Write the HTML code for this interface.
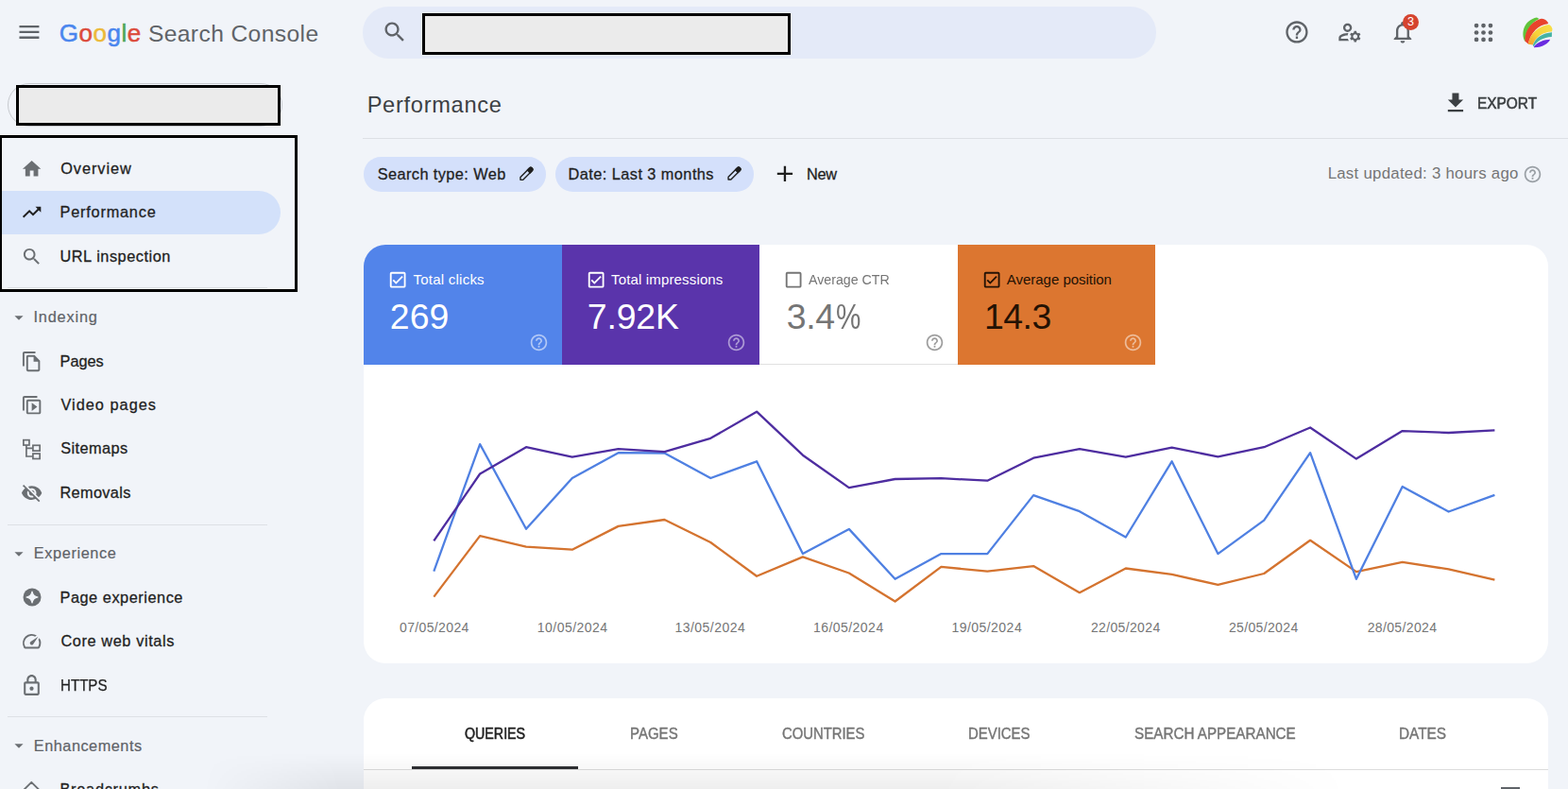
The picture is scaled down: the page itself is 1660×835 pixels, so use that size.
<!DOCTYPE html>
<html lang="en">
<head>
<meta charset="utf-8">
<title>Performance</title>
<style>
*{box-sizing:border-box;margin:0;padding:0}
html,body{width:1660px;height:835px;overflow:hidden;background:#f1f4f9}
body{position:relative;font-family:"Liberation Sans",Arial,sans-serif;color:#202124}
.a{position:absolute}
.t{position:absolute;white-space:nowrap}
svg{position:absolute;display:block;overflow:visible}
.hr{position:absolute;height:1px;background:#dde0e5}
</style>
</head>
<body>
<div id="hdr">
<svg style="left:17.25px;top:20.40px;fill:#5f6368" width="27.90" height="27.90" viewBox="0 0 24 24"><path d="M3 18h18v-2H3v2zm0-5h18v-2H3v2zm0-7v2h18V6H3z"/></svg>
<div class="t" id="logo" style="left:62.70px;top:18.20px;line-height:34px;height:34px;font-size:26px;letter-spacing:0.520px;-webkit-text-stroke:.5px"><span style="color:#4a86ee">G</span><span style="color:#dc4b3c">o</span><span style="color:#ecb93a">o</span><span style="color:#4a86ee">g</span><span style="color:#4ea65a">l</span><span style="color:#dc4b3c">e</span></div>
<div class="t" id="sc" style="left:156.90px;top:19.98px;line-height:32px;height:32px;font-size:24.6px;letter-spacing:0.400px;color:#5f6368;">Search Console</div>
<div class="a" id="sbar" style="left:384.2px;top:7.2px;width:840px;height:54.5px;border-radius:27.25px;background:#e4eaf8"></div>
<svg style="left:403.65px;top:20.25px;fill:#5f6368" width="27.90" height="27.90" viewBox="0 0 24 24"><path d="M15.5 14h-.79l-.28-.27C15.410 12.590 16 11.110 16 9.500 16 5.910 13.090 3 9.500 3S3 5.910 3 9.500 5.910 16 9.500 16c1.610 0 3.090-.59 4.230-1.570l.27.28v.79l5 4.990L20.490 19l-4.990-5zm-6 0C7.010 14 5 11.990 5 9.500S7.010 5 9.500 5 14 7.010 14 9.500 11.990 14 9.500 14z"/></svg>
<div class="a" id="red1" style="left:447px;top:14px;width:390.4px;height:44px;border:3px solid #000;background:#ebebeb"></div>
<svg style="left:1358.65px;top:20.35px;fill:#5f6368" width="27.90" height="27.90" viewBox="0 0 24 24"><path d="M11 18h2v-2h-2v2zm1-16C6.480 2 2 6.480 2 12s4.480 10 10 10 10-4.480 10-10S17.520 2 12 2zm0 18c-4.410 0-8-3.590-8-8s3.590-8 8-8 8 3.590 8 8-3.590 8-8 8zm0-14c-2.210 0-4 1.790-4 4h2c0-1.100.9-2 2-2s2 .9 2 2c0 2-3 1.750-3 5h2c0-2.250 3-2.500 3-5 0-2.210-1.790-4-4-4z"/></svg>
<svg style="left:1414.56px;top:20.17px;fill:#5f6368" width="27.90" height="27.90" viewBox="0 0 24 24"><path d="M4 18v-.65c0-.34.16-.66.41-.81C6.100 15.530 8.030 15 10 15c.03 0 .05 0 .08.010.1-.7.3-1.370.59-1.980-.22-.02-.44-.03-.67-.03-2.420 0-4.680.67-6.610 1.820-.88.52-1.390 1.500-1.390 2.530V20h9.260c-.42-.6-.75-1.280-.97-2H4zM10 12c2.210 0 4-1.790 4-4s-1.790-4-4-4-4 1.790-4 4 1.790 4 4 4zm0-6c1.100 0 2 .9 2 2s-.9 2-2 2-2-.9-2-2 .9-2 2-2zM20.750 16c0-.22-.03-.42-.06-.63l1.140-1.010-1-1.730-1.450.49c-.32-.27-.68-.48-1.080-.63L18 11h-2l-.3 1.490c-.4.15-.76.36-1.080.63l-1.450-.49-1 1.730 1.140 1.010c-.03.21-.06.41-.06.63s.03.42.06.63l-1.140 1.010 1 1.730 1.450-.49c.32.27.68.48 1.080.63L16 21h2l.3-1.490c.4-.15.76-.36 1.080-.63l1.450.49 1-1.730-1.140-1.010c.03-.21.06-.41.06-.63zM17 18c-1.100 0-2-.9-2-2s.9-2 2-2 2 .9 2 2-.9 2-2 2z"/></svg>
<svg style="left:1470.60px;top:20.36px;fill:#5f6368" width="27.90" height="27.90" viewBox="0 0 24 24"><path d="M12 22c1.100 0 2-.9 2-2h-4c0 1.100.9 2 2 2zm6-6v-5c0-3.070-1.630-5.640-4.500-6.320V4c0-.83-.67-1.500-1.500-1.500s-1.500.67-1.500 1.500v.68C7.640 5.360 6 7.920 6 11v5l-2 2v1h16v-1l-2-2zm-2 1H8v-6c0-2.480 1.510-4.500 4-4.500s4 2.020 4 4.500v6z"/></svg>
<div class="a" id="badge" style="left:1484.8px;top:14.6px;width:17.3px;height:17.3px;border-radius:50%;background:#d5442f"></div>
<div class="t" style="left:1484.8px;top:14.6px;width:17.3px;height:17.3px;line-height:17.3px;text-align:center;font-size:12.5px;color:#fff">3</div>
<svg style="left:0;top:0;fill:#5f6368" width="1660" height="70" viewBox="0 0 1660 70"><circle cx="1563.05" cy="27.05" r="2.35"/><circle cx="1563.05" cy="34.50" r="2.35"/><circle cx="1563.05" cy="41.95" r="2.35"/><circle cx="1570.50" cy="27.05" r="2.35"/><circle cx="1570.50" cy="34.50" r="2.35"/><circle cx="1570.50" cy="41.95" r="2.35"/><circle cx="1577.95" cy="27.05" r="2.35"/><circle cx="1577.95" cy="34.50" r="2.35"/><circle cx="1577.95" cy="41.95" r="2.35"/></svg>
<svg id="avatar" style="left:1610.5px;top:18.2px" width="33" height="33" viewBox="0 0 33 33"><defs><linearGradient id="avy" x1="0" y1="1" x2="1" y2="0"><stop offset="0" stop-color="#f39a2b"/><stop offset=".45" stop-color="#f6d33a"/><stop offset="1" stop-color="#f7e04a"/></linearGradient></defs><path d="M3.4 26 C-1.500 16 3 3 16 .5 L18.500 2 C9 6 4 16 3.800 25z" fill="#5fc43a"/><path d="M3.600 25.700 C2.500 14 12 3 21.400 1.700 C24.500 2 27 4 28.200 6.500 L27.400 7.300 C18 8 9 17 7 28.600z" fill="#e8432c"/><path d="M6.800 28.800 C9 17 18 9.300 29 8 C31 9 32 11 32.500 12.700 L32 15.600 C22 16 15 21 11.800 29.600z" fill="url(#avy)"/><path d="M11.700 30 C15 21.500 22 17 32 16.300 L31.800 20.900 C23 21.500 16 25 12.900 31.200z" fill="#45b3a4"/><path d="M12.900 31.600 C17 26 24 24 30 23.800 C29 27.500 22 32.500 13 32.300z" fill="#6a2be0"/></svg>
</div>
<div id="side">
<div class="a" id="prop" style="left:8px;top:88px;width:291px;height:46px;border-radius:23px;border:1px solid #c6c9ce"></div>
<div class="a" id="red2" style="left:17px;top:90px;width:280px;height:43px;border:3px solid #000;background:#ebebeb"></div>
<div class="a" id="sel" style="left:0;top:201.8px;width:297px;height:46px;border-radius:0 23px 23px 0;background:#d3e1fa"></div>
<div class="hr" style="left:8px;top:304px;width:275px"></div>
<div class="a" id="box" style="left:-1px;top:143px;width:315.800px;height:166.200px;border:3px solid #000"></div>
<svg style="left:21.73px;top:167.11px;fill:#6b6f73" width="23.25" height="23.25" viewBox="0 0 24 24"><path d="M10 20v-6h4v6h5v-8h3L12 3 2 12h3v8z"/></svg>
<svg style="left:21.98px;top:213.38px;fill:#1f1f1f" width="23.25" height="23.25" viewBox="0 0 24 24"><path d="M16 6l2.290 2.290-4.880 4.880-4-4L2 16.590 3.410 18l6-6 4 4 6.300-6.290L22 12V6z"/></svg>
<svg style="left:21.82px;top:260.12px;fill:#6b6f73" width="23.25" height="23.25" viewBox="0 0 24 24"><path d="M15.5 14h-.79l-.28-.27C15.410 12.590 16 11.110 16 9.500 16 5.910 13.090 3 9.500 3S3 5.910 3 9.500 5.910 16 9.500 16c1.610 0 3.090-.59 4.230-1.570l.27.28v.79l5 4.990L20.490 19l-4.990-5zm-6 0C7.010 14 5 11.990 5 9.500S7.010 5 9.500 5 14 7.010 14 9.500 11.990 14 9.500 14z"/></svg>
<div class="t" id="n1" style="left:64.20px;top:167.89px;line-height:21px;height:21px;font-size:16.3px;letter-spacing:0.957px;color:#1f1f1f;-webkit-text-stroke:0.3px #1f1f1f;">Overview</div>
<div class="t" id="n2" style="left:63.50px;top:214.49px;line-height:21px;height:21px;font-size:16.3px;letter-spacing:0.800px;color:#1f1f1f;-webkit-text-stroke:0.3px #1f1f1f;">Performance</div>
<div class="t" id="n3" style="left:63.50px;top:260.99px;line-height:21px;height:21px;font-size:16.3px;letter-spacing:0.546px;color:#1f1f1f;-webkit-text-stroke:0.3px #1f1f1f;">URL inspection</div>
<svg style="left:8.70px;top:324.94px;fill:#6b6f73" width="22.00" height="22.00" viewBox="0 0 24 24"><path d="M7 10l5 5 5-5z"/></svg>
<div class="t" id="s1" style="left:35.50px;top:325.19px;line-height:21px;height:21px;font-size:16.3px;letter-spacing:0.829px;color:#5f6368;-webkit-text-stroke:0.2px #5f6368;">Indexing</div>
<svg style="left:21.81px;top:370.52px;fill:#6b6f73" width="23.25" height="23.25" viewBox="0 0 24 24"><path d="M16 1H4c-1.100 0-2 .9-2 2v14h2V3h12V1zm-1 4H8c-1.100 0-1.990.9-1.990 2L6 21c0 1.100.89 2 1.990 2H19c1.100 0 2-.9 2-2V11l-6-6zM8 21V7h6v5h5v9H8z"/></svg>
<div class="t" id="n4" style="left:63.50px;top:371.69px;line-height:21px;height:21px;font-size:16.3px;letter-spacing:0.025px;color:#1f1f1f;-webkit-text-stroke:0.3px #1f1f1f;">Pages</div>
<svg style="left:21.73px;top:416.88px;fill:#6b6f73" width="23.25" height="23.25" viewBox="0 0 24 24"><path transform="translate(0 24) scale(1 -1)" d="M4 6H2v14c0 1.100.9 2 2 2h14v-2H4V6zm16-4H8c-1.100 0-2 .9-2 2v12c0 1.100.9 2 2 2h12c1.100 0 2-.9 2-2V4c0-1.100-.9-2-2-2zm0 14H8V4h12v12zM12 5.500v9l6-4.500z"/></svg>
<div class="t" id="n5" style="left:64.50px;top:418.09px;line-height:21px;height:21px;font-size:16.3px;letter-spacing:1.020px;color:#1f1f1f;-webkit-text-stroke:0.3px #1f1f1f;">Video pages</div>
<svg style="left:0;top:0;fill:none;stroke:#6b6f73;stroke-width:1.700" width="60" height="500" viewBox="0 0 60 500"><rect x="24.850" y="465.650" width="6.100" height="5.400"/><path d="M27.900 471V483h7M27.900 474.300h7"/><rect x="34.900" y="471.300" width="7.250" height="5.800"/><rect x="34.900" y="480.100" width="7.250" height="5.400"/></svg>
<div class="t" id="n6" style="left:64.20px;top:464.49px;line-height:21px;height:21px;font-size:16.3px;letter-spacing:0.443px;color:#1f1f1f;-webkit-text-stroke:0.3px #1f1f1f;">Sitemaps</div>
<svg style="left:21.77px;top:510.09px;fill:#6b6f73" width="23.25" height="23.25" viewBox="0 0 24 24"><path d="M12 7c2.760 0 5 2.240 5 5 0 .65-.13 1.260-.36 1.830l2.920 2.920c1.510-1.260 2.700-2.890 3.430-4.750-1.730-4.390-6-7.500-11-7.500-1.400 0-2.740.25-3.980.7l2.160 2.160C10.740 7.130 11.350 7 12 7zM2 4.270l2.280 2.280.46.46C3.080 8.300 1.780 10.020 1 12c1.730 4.390 6 7.500 11 7.500 1.550 0 3.030-.3 4.380-.84l.42.42L19.730 22 21 20.730 3.270 3 2 4.270zM7.530 9.800l1.550 1.550c-.05.21-.08.43-.08.65 0 1.660 1.340 3 3 3 .22 0 .44-.03.65-.08l1.550 1.550c-.67.33-1.410.53-2.200.53-2.760 0-5-2.240-5-5 0-.79.2-1.530.53-2.200zm4.310-.78l3.150 3.150.02-.16c0-1.660-1.340-3-3-3l-.17.010z"/></svg>
<div class="t" id="n7" style="left:63.50px;top:511.09px;line-height:21px;height:21px;font-size:16.3px;letter-spacing:0.343px;color:#1f1f1f;-webkit-text-stroke:0.3px #1f1f1f;">Removals</div>
<div class="hr" style="left:8px;top:555px;width:275px"></div>
<svg style="left:8.70px;top:574.74px;fill:#6b6f73" width="22.00" height="22.00" viewBox="0 0 24 24"><path d="M7 10l5 5 5-5z"/></svg>
<div class="t" id="s2" style="left:35.80px;top:575.19px;line-height:21px;height:21px;font-size:16.3px;letter-spacing:0.622px;color:#5f6368;-webkit-text-stroke:0.2px #5f6368;">Experience</div>
<svg style="left:23.500px;top:622.100px" width="20" height="20" viewBox="0 0 20 20"><circle cx="10" cy="10" r="9.500" fill="#6b6f73"/><path d="M10 4 Q10.900 9.100 16 10 Q10.900 10.900 10 16 Q9.100 10.900 4 10 Q9.100 9.100 10 4z" fill="#f1f4f9" stroke="#f1f4f9" stroke-width="1.200" stroke-linejoin="round"/></svg>
<div class="t" id="n8" style="left:63.50px;top:621.69px;line-height:21px;height:21px;font-size:16.3px;letter-spacing:0.550px;color:#1f1f1f;-webkit-text-stroke:0.3px #1f1f1f;">Page experience</div>
<svg style="left:21.78px;top:667.12px;fill:#6b6f73" width="23.25" height="23.25" viewBox="0 0 24 24"><path d="M20.380 8.570l-1.230 1.850a8 8 0 0 1-.22 7.580H5.070A8 8 0 0 1 15.580 6.850l1.850-1.230A10 10 0 0 0 3.350 19a2 2 0 0 0 1.720 1h13.850a2 2 0 0 0 1.740-1 10 10 0 0 0-.27-10.440zm-9.790 6.840a2 2 0 0 0 2.830 0l5.660-8.490-8.490 5.660a2 2 0 0 0 0 2.830z"/></svg>
<div class="t" id="n9" style="left:64.50px;top:668.19px;line-height:21px;height:21px;font-size:16.3px;letter-spacing:0.607px;color:#1f1f1f;-webkit-text-stroke:0.3px #1f1f1f;">Core web vitals</div>
<svg style="left:20.95px;top:713.47px;fill:#6b6f73" width="25.00" height="25.00" viewBox="0 0 24 24"><path d="M18 8h-1V6c0-2.760-2.240-5-5-5S7 3.240 7 6v2H6c-1.100 0-2 .9-2 2v10c0 1.100.9 2 2 2h12c1.100 0 2-.9 2-2V10c0-1.100-.9-2-2-2zM9 6c0-1.660 1.340-3 3-3s3 1.340 3 3v2H9V6zm9 14H6V10h12v10zm-6-3c1.100 0 2-.9 2-2s-.9-2-2-2-2 .9-2 2 .9 2 2 2z"/></svg>
<div class="t" id="n10" style="left:63.57px;top:714.79px;line-height:21px;height:21px;font-size:16.2px;transform:scaleX(0.9327);transform-origin:0 0;color:#1f1f1f;-webkit-text-stroke:0.25px #1f1f1f;">HTTPS</div>
<div class="hr" style="left:8px;top:758px;width:275px"></div>
<svg style="left:8.70px;top:778.24px;fill:#6b6f73" width="22.00" height="22.00" viewBox="0 0 24 24"><path d="M7 10l5 5 5-5z"/></svg>
<div class="t" id="s3" style="left:35.80px;top:778.99px;line-height:21px;height:21px;font-size:16.3px;letter-spacing:0.518px;color:#5f6368;-webkit-text-stroke:0.2px #5f6368;">Enhancements</div>
<svg style="left:0;top:800px;fill:none;stroke:#6b6f73;stroke-width:1.900;stroke-linejoin:round" width="60" height="60" viewBox="0 800 60 60"><path d="M33.300 827.800 L42.500 837 L33.300 846.200 L24.100 837z"/></svg>
<div class="t" id="n11" style="left:63.50px;top:825.49px;line-height:21px;height:21px;font-size:16.3px;letter-spacing:0.750px;color:#1f1f1f;-webkit-text-stroke:0.3px #1f1f1f;">Breadcrumbs</div>
</div>
<div id="main">
<div class="t" id="title" style="left:388.65px;top:95.97px;line-height:31px;height:31px;font-size:23.6px;letter-spacing:0.725px;color:#3c4043;">Performance</div>
<svg style="left:1527.20px;top:94.53px;fill:#3c4043" width="27.90" height="27.90" viewBox="0 0 24 24"><path d="M19 9h-4V3H9v6H5l7 7 7-7zM5 18v2h14v-2H5z"/></svg>
<div class="t" id="export" style="left:1564.05px;top:98.69px;line-height:21px;height:21px;font-size:16.2px;transform:scaleX(0.9530);transform-origin:0 0;color:#3c4043;-webkit-text-stroke:0.55px #3c4043;">EXPORT</div>
<div class="hr" style="left:384px;top:146px;width:1276px"></div>
<div class="a" id="chip1" style="left:385.4px;top:166px;width:192.8px;height:36.6px;border-radius:18.3px;background:#d4e0fb"></div>
<div class="t" id="c1t" style="left:399.70px;top:173.94px;line-height:21px;height:21px;font-size:16.3px;letter-spacing:0.433px;color:#1f1f1f;-webkit-text-stroke:0.3px #1f1f1f;">Search type: Web</div>
<svg style="left:0;top:0" width="1660" height="835" viewBox="0 0 1660 835"><g transform="translate(0.00 0.00)" fill="none" stroke="#1f1f1f" stroke-width="1.400" stroke-linejoin="round"><path d="M550.950 190.350 L550.950 187.550 L560.450 178.050 A1.900 1.900 0 0 1 563.250 180.850 L553.750 190.350z"/><path d="M558.400 180.100 L560.450 178.050 A1.900 1.900 0 0 1 563.250 180.850 L561.200 182.900z" fill="#1f1f1f"/></g></svg>
<div class="a" id="chip2" style="left:587.8px;top:166px;width:210.6px;height:36.6px;border-radius:18.3px;background:#d4e0fb"></div>
<div class="t" id="c2t" style="left:601.60px;top:173.94px;line-height:21px;height:21px;font-size:16.3px;letter-spacing:0.456px;color:#1f1f1f;-webkit-text-stroke:0.3px #1f1f1f;">Date: Last 3 months</div>
<svg style="left:0;top:0" width="1660" height="835" viewBox="0 0 1660 835"><g transform="translate(220.10 -0.30)" fill="none" stroke="#1f1f1f" stroke-width="1.400" stroke-linejoin="round"><path d="M550.950 190.350 L550.950 187.550 L560.450 178.050 A1.900 1.900 0 0 1 563.250 180.850 L553.750 190.350z"/><path d="M558.400 180.100 L560.450 178.050 A1.900 1.900 0 0 1 563.250 180.850 L561.200 182.900z" fill="#1f1f1f"/></g></svg>
<svg style="left:816.95px;top:170.45px;fill:#1f1f1f" width="27.90" height="27.90" viewBox="0 0 24 24"><path d="M19 13h-6v6h-2v-6H5v-2h6V5h2v6h6v2z"/></svg>
<div class="t" id="new" style="left:854.10px;top:173.94px;line-height:21px;height:21px;font-size:16.3px;letter-spacing:-0.300px;color:#1f1f1f;-webkit-text-stroke:0.3px #1f1f1f;">New</div>
<div class="t" id="upd" style="left:1405.65px;top:173.19px;line-height:22px;height:22px;font-size:16.8px;letter-spacing:0.281px;color:#757575;">Last updated: 3 hours ago</div>
<svg style="left:1612.40px;top:174.00px;fill:#9aa0a6" width="21.00" height="21.00" viewBox="0 0 24 24"><path d="M11 18h2v-2h-2v2zm1-16C6.480 2 2 6.480 2 12s4.480 10 10 10 10-4.480 10-10S17.520 2 12 2zm0 18c-4.410 0-8-3.590-8-8s3.590-8 8-8 8 3.590 8 8-3.590 8-8 8zm0-14c-2.210 0-4 1.790-4 4h2c0-1.100.9-2 2-2s2 .9 2 2c0 2-3 1.750-3 5h2c0-2.250 3-2.500 3-5 0-2.210-1.790-4-4-4z"/></svg>
<div class="a" id="card1" style="left:385px;top:258.6px;width:1254px;height:443.2px;border-radius:23px;background:#fff"></div>
<div class="a" style="left:804px;top:385px;width:210.5px;height:1px;background:#e0e0e0"></div>
<div class="a" id="tile0" style="left:385.0px;top:258.600px;width:209.9px;height:127.100px;background:#5284ea;border-radius:23px 0 0 0;"></div>
<svg style="left:409.90px;top:284.90px;fill:#fff" width="22.30" height="22.30" viewBox="0 0 24 24"><path d="M19 3H5c-1.110 0-2 .9-2 2v14c0 1.100.89 2 2 2h14c1.110 0 2-.9 2-2V5c0-1.100-.89-2-2-2zm0 16H5V5h14v14zM17.990 9l-1.410-1.420-6.590 6.590-2.580-2.570-1.420 1.410 4 3.990z"/></svg>
<div class="t" id="tl0" style="left:437.50px;top:286.17px;line-height:20px;height:20px;font-size:15px;letter-spacing:0.236px;color:#fff;">Total clicks</div>
<div class="t" id="tv0" style="left:412.80px;top:311.43px;line-height:49px;height:49px;font-size:37.4px;letter-spacing:0.050px;color:#fff;">269</div>
<svg style="left:559.80px;top:351.80px;fill:rgba(255,255,255,.55)" width="21.00" height="21.00" viewBox="0 0 24 24"><path d="M11 18h2v-2h-2v2zm1-16C6.480 2 2 6.480 2 12s4.480 10 10 10 10-4.480 10-10S17.520 2 12 2zm0 18c-4.410 0-8-3.590-8-8s3.590-8 8-8 8 3.590 8 8-3.590 8-8 8zm0-14c-2.210 0-4 1.790-4 4h2c0-1.100.9-2 2-2s2 .9 2 2c0 2-3 1.750-3 5h2c0-2.250 3-2.500 3-5 0-2.210-1.790-4-4-4z"/></svg>
<div class="a" id="tile1" style="left:594.9px;top:258.600px;width:209.2px;height:127.100px;background:#5a34ab;"></div>
<svg style="left:619.75px;top:284.90px;fill:#fff" width="22.30" height="22.30" viewBox="0 0 24 24"><path d="M19 3H5c-1.110 0-2 .9-2 2v14c0 1.100.89 2 2 2h14c1.110 0 2-.9 2-2V5c0-1.100-.89-2-2-2zm0 16H5V5h14v14zM17.990 9l-1.410-1.420-6.590 6.590-2.580-2.570-1.420 1.410 4 3.990z"/></svg>
<div class="t" id="tl1" style="left:647.00px;top:286.17px;line-height:20px;height:20px;font-size:15px;letter-spacing:0.156px;color:#fff;">Total impressions</div>
<div class="t" id="tv1" style="left:621.80px;top:311.43px;line-height:49px;height:49px;font-size:37.4px;letter-spacing:-0.150px;color:#fff;">7.92K</div>
<svg style="left:769.40px;top:351.80px;fill:rgba(255,255,255,.5)" width="21.00" height="21.00" viewBox="0 0 24 24"><path d="M11 18h2v-2h-2v2zm1-16C6.480 2 2 6.480 2 12s4.480 10 10 10 10-4.480 10-10S17.520 2 12 2zm0 18c-4.410 0-8-3.590-8-8s3.590-8 8-8 8 3.590 8 8-3.590 8-8 8zm0-14c-2.210 0-4 1.790-4 4h2c0-1.100.9-2 2-2s2 .9 2 2c0 2-3 1.750-3 5h2c0-2.250 3-2.500 3-5 0-2.210-1.790-4-4-4z"/></svg>
<svg style="left:829.25px;top:284.90px;fill:#757575" width="22.30" height="22.30" viewBox="0 0 24 24"><path d="M19 5v14H5V5h14m0-2H5c-1.100 0-2 .9-2 2v14c0 1.100.9 2 2 2h14c1.100 0 2-.9 2-2V5c0-1.100-.9-2-2-2z"/></svg>
<div class="t" id="tl2" style="left:856.10px;top:286.17px;line-height:20px;height:20px;font-size:15.2px;transform:scaleX(0.9352);transform-origin:0 0;color:#757575;">Average CTR</div>
<div class="t" id="tv2" style="left:832.80px;top:311.43px;line-height:49px;height:49px;font-size:37.4px;letter-spacing:-0.400px;color:#757575;">3.4</div>
<div class="t" id="tv2p" style="left:884.71px;top:311.43px;line-height:49px;height:49px;font-size:37.4px;transform:scaleX(0.7935);transform-origin:0 0;color:#757575;">%</div>
<svg style="left:979.00px;top:351.80px;fill:#9e9e9e" width="21.00" height="21.00" viewBox="0 0 24 24"><path d="M11 18h2v-2h-2v2zm1-16C6.480 2 2 6.480 2 12s4.480 10 10 10 10-4.480 10-10S17.520 2 12 2zm0 18c-4.410 0-8-3.590-8-8s3.590-8 8-8 8 3.590 8 8-3.590 8-8 8zm0-14c-2.210 0-4 1.790-4 4h2c0-1.100.9-2 2-2s2 .9 2 2c0 2-3 1.750-3 5h2c0-2.250 3-2.500 3-5 0-2.210-1.790-4-4-4z"/></svg>
<div class="a" id="tile3" style="left:1014.1px;top:258.600px;width:209.3px;height:127.100px;background:#dc7630;"></div>
<svg style="left:1038.85px;top:284.90px;fill:#241204" width="22.30" height="22.30" viewBox="0 0 24 24"><path d="M19 3H5c-1.110 0-2 .9-2 2v14c0 1.100.89 2 2 2h14c1.110 0 2-.9 2-2V5c0-1.100-.89-2-2-2zm0 16H5V5h14v14zM17.990 9l-1.410-1.420-6.590 6.590-2.580-2.570-1.420 1.410 4 3.990z"/></svg>
<div class="t" id="tl3" style="left:1065.80px;top:286.17px;line-height:20px;height:20px;font-size:15px;letter-spacing:-0.020px;color:#241204;">Average position</div>
<div class="t" id="tv3" style="left:1041.90px;top:311.43px;line-height:49px;height:49px;font-size:37.4px;letter-spacing:-0.433px;color:#241204;">14.3</div>
<svg style="left:1188.60px;top:351.80px;fill:rgba(255,255,255,.5)" width="21.00" height="21.00" viewBox="0 0 24 24"><path d="M11 18h2v-2h-2v2zm1-16C6.480 2 2 6.480 2 12s4.480 10 10 10 10-4.480 10-10S17.520 2 12 2zm0 18c-4.410 0-8-3.590-8-8s3.590-8 8-8 8 3.590 8 8-3.590 8-8 8zm0-14c-2.210 0-4 1.790-4 4h2c0-1.100.9-2 2-2s2 .9 2 2c0 2-3 1.750-3 5h2c0-2.250 3-2.500 3-5 0-2.210-1.790-4-4-4z"/></svg>
<svg id="chart" style="left:0;top:400px" width="1660" height="260" viewBox="0 400 1660 260" fill="none" stroke-width="2.300" stroke-linejoin="round"><polyline stroke="#d4732f" points="459.3,631.6 508.1,567.1 557.0,578.7 605.8,581.7 654.6,556.9 703.5,550.0 752.3,574.0 801.1,609.8 849.9,589.4 898.8,606.5 947.6,636.5 996.4,599.9 1045.3,604.6 1094.1,599.1 1142.9,627.2 1191.8,601.5 1240.6,607.9 1289.4,618.9 1338.2,607.0 1387.1,571.8 1435.9,605.1 1484.7,594.9 1533.6,602.4 1582.4,613.7"/><polyline stroke="#4f80e2" points="459.3,604.6 508.1,470.1 557.0,559.7 605.8,506.0 654.6,479.2 703.5,479.5 752.3,506.0 801.1,488.3 849.9,586.1 898.8,559.9 947.6,612.8 996.4,586.1 1045.3,586.1 1094.1,524.1 1142.9,541.2 1191.8,568.5 1240.6,488.3 1289.4,586.1 1338.2,550.6 1387.1,479.2 1435.9,612.8 1484.7,515.0 1533.6,541.5 1582.4,523.9"/><polyline stroke="#4e2da0" points="459.3,572.3 508.1,501.5 557.0,473.2 605.8,483.6 654.6,475.1 703.5,478.1 752.3,463.8 801.1,435.7 849.9,481.7 898.8,516.1 947.6,507.0 996.4,506.2 1045.3,508.7 1094.1,484.7 1142.9,475.1 1191.8,483.7 1240.6,473.7 1289.4,483.4 1338.2,473.2 1387.1,452.5 1435.9,485.6 1484.7,456.1 1533.6,458.0 1582.4,455.3"/></svg>
<div class="t" id="ax0" style="left:423.05px;top:654.96px;line-height:18px;height:18px;font-size:14px;letter-spacing:0.356px;color:#757575;">07/05/2024</div>
<div class="t" id="ax1" style="left:568.80px;top:654.96px;line-height:18px;height:18px;font-size:14px;letter-spacing:0.467px;color:#757575;">10/05/2024</div>
<div class="t" id="ax2" style="left:714.45px;top:654.96px;line-height:18px;height:18px;font-size:14px;letter-spacing:0.467px;color:#757575;">13/05/2024</div>
<div class="t" id="ax3" style="left:860.90px;top:654.96px;line-height:18px;height:18px;font-size:14px;letter-spacing:0.467px;color:#757575;">16/05/2024</div>
<div class="t" id="ax4" style="left:1007.40px;top:654.96px;line-height:18px;height:18px;font-size:14px;letter-spacing:0.467px;color:#757575;">19/05/2024</div>
<div class="t" id="ax5" style="left:1154.90px;top:654.96px;line-height:18px;height:18px;font-size:14px;letter-spacing:0.356px;color:#757575;">22/05/2024</div>
<div class="t" id="ax6" style="left:1300.90px;top:654.96px;line-height:18px;height:18px;font-size:14px;letter-spacing:0.356px;color:#757575;">25/05/2024</div>
<div class="t" id="ax7" style="left:1447.70px;top:654.96px;line-height:18px;height:18px;font-size:14px;letter-spacing:0.356px;color:#757575;">28/05/2024</div>
<div class="a" id="card2" style="left:385px;top:738.900px;width:1254px;height:140px;border-radius:23px;background:#fff;overflow:hidden"></div>
<div class="t" id="tb1" style="left:492.05px;top:765.89px;line-height:21px;height:21px;font-size:16.2px;transform:scaleX(0.8801);transform-origin:0 0;color:#212121;-webkit-text-stroke:0.55px #212121;">QUERIES</div>
<div class="t" id="tb2" style="left:666.57px;top:765.89px;line-height:21px;height:21px;font-size:16.2px;transform:scaleX(0.9283);transform-origin:0 0;color:#757575;-webkit-text-stroke:0.4px #757575;">PAGES</div>
<div class="t" id="tb3" style="left:827.90px;top:765.89px;line-height:21px;height:21px;font-size:16.2px;transform:scaleX(0.9168);transform-origin:0 0;color:#757575;-webkit-text-stroke:0.4px #757575;">COUNTRIES</div>
<div class="t" id="tb4" style="left:1024.88px;top:765.89px;line-height:21px;height:21px;font-size:16.2px;transform:scaleX(0.9214);transform-origin:0 0;color:#757575;-webkit-text-stroke:0.4px #757575;">DEVICES</div>
<div class="t" id="tb5" style="left:1200.80px;top:765.89px;line-height:21px;height:21px;font-size:16.2px;transform:scaleX(0.9396);transform-origin:0 0;color:#757575;-webkit-text-stroke:0.4px #757575;">SEARCH APPEARANCE</div>
<div class="t" id="tb6" style="left:1481.35px;top:765.89px;line-height:21px;height:21px;font-size:16.2px;transform:scaleX(0.9481);transform-origin:0 0;color:#757575;-webkit-text-stroke:0.4px #757575;">DATES</div>
<div class="hr" style="left:385px;top:814px;width:1254px;background:#dcdcdc"></div>
<div class="a" style="left:436.300px;top:811.400px;width:175.400px;height:2.600px;background:#2f3033"></div>
<div class="a" style="left:1588.500px;top:833px;width:20.600px;height:2px;background:#5f6368"></div>
<div class="a" id="shadow" style="left:215px;top:797px;width:1215px;height:38px;background:linear-gradient(to bottom,rgba(0,0,0,0),rgba(0,0,0,.065));-webkit-mask-image:linear-gradient(90deg,transparent 0,#000 12%,#000 64%,transparent 100%);mask-image:linear-gradient(90deg,transparent 0,#000 12%,#000 64%,transparent 100%)"></div>
</div>
</body>
</html>
